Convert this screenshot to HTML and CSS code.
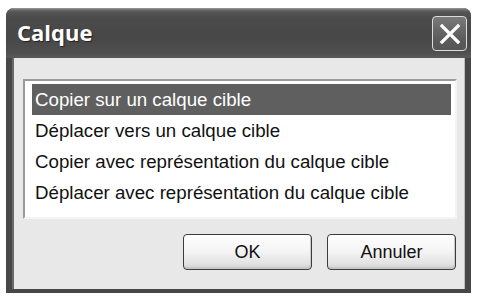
FILE: index.html
```html
<!DOCTYPE html>
<html lang="fr">
<head>
<meta charset="utf-8">
<title>Calque</title>
<link rel="stylesheet" href="styles.css">
</head>
<body>
<div class="window">
  <div class="titlebar">
    <span class="title">Calque</span>
    <button class="close" aria-label="Fermer">
      <svg width="22" height="22" viewBox="0 0 22 22"><path d="M3 3 L19 19 M19 3 L3 19" stroke="#fff" stroke-width="3.2" stroke-linecap="square"/></svg>
    </button>
  </div>
  <div class="body">
    <div class="listbox">
      <div class="row selected">Copier sur un calque cible</div>
      <div class="row">Déplacer vers un calque cible</div>
      <div class="row">Copier avec représentation du calque cible</div>
      <div class="row">Déplacer avec représentation du calque cible</div>
    </div>
    <div class="buttons">
      <button class="btn">OK</button>
      <button class="btn">Annuler</button>
    </div>
  </div>
</div>
</body>
</html>
```

FILE: styles.css
```css
html, body {
  margin: 0;
  padding: 0;
  background: #ffffff;
}
body {
  font-family: "Liberation Sans", Arial, sans-serif;
}
.window {
  margin: 8px 0 0 6px;
  width: 465px;
  height: 285px;
  background: #474747;
  border-radius: 8px 8px 0 0;
  display: flex;
  flex-direction: column;
  box-sizing: border-box;
}
.titlebar {
  height: 50px;
  flex: none;
  display: flex;
  align-items: center;
  justify-content: space-between;
  padding: 0 4px 0 11px;
  border-radius: 8px 8px 0 0;
  background: linear-gradient(#9a9a9a 0, #6a6a6a 2px, #555 4px, #4b4b4b 10px, #474747 30px, #4e4e4e 44px, #5a5a5a 50px);
}
.title {
  font-family: "Open Sans", "Liberation Sans", sans-serif;
  font-weight: 700;
  font-size: 22px;
  color: #fff;
  text-shadow: 1px 1px 1px #222;
  margin-top: -2px;
}
.close {
  width: 35px;
  height: 35px;
  margin-top: 1px;
  padding: 0;
  border: 1px solid #dcdcdc;
  border-radius: 4px;
  background: linear-gradient(#7a7a7a, #5e5e5e 60%, #555);
  display: flex;
  align-items: center;
  justify-content: center;
}
.body {
  flex: 1;
  margin: 0 6px 4px 6px;
  background: #e8e8e8;
  border-left: 2px solid #6a6a6a;
  border-right: 1px solid #bdbdbd;
  display: flex;
  flex-direction: column;
}
.listbox {
  margin: 21px 7px 0 9px;
  height: 140px;
  box-sizing: border-box;
  background: #fff;
  border-top: 2px solid #9a9a9a;
  border-left: 2px solid #9a9a9a;
  border-right: 2px solid #f4f4f4;
  border-bottom: 2px solid #f4f4f4;
  padding: 3px 4px 0 7px;
}
.row {
  height: 31px;
  line-height: 31px;
  padding-left: 3px;
  font-size: 18.7px;
  color: #111;
  white-space: nowrap;
}
.row.selected {
  background: #5f5f5f;
  color: #fff;
}
.buttons {
  display: flex;
  justify-content: flex-end;
  gap: 15px;
  margin: 15px 8px 0 0;
}
.btn {
  width: 129px;
  height: 36px;
  box-sizing: border-box;
  border: 1px solid #3c3c3c;
  border-radius: 4px;
  background: linear-gradient(#ffffff, #f3f3f3 50%, #e2e2e2 85%, #cfcfcf);
  box-shadow: inset -1px -2px 0 #c8c8c8;
  font-family: "Liberation Sans", Arial, sans-serif;
  font-size: 18px;
  color: #111;
  padding: 0;
}
```
